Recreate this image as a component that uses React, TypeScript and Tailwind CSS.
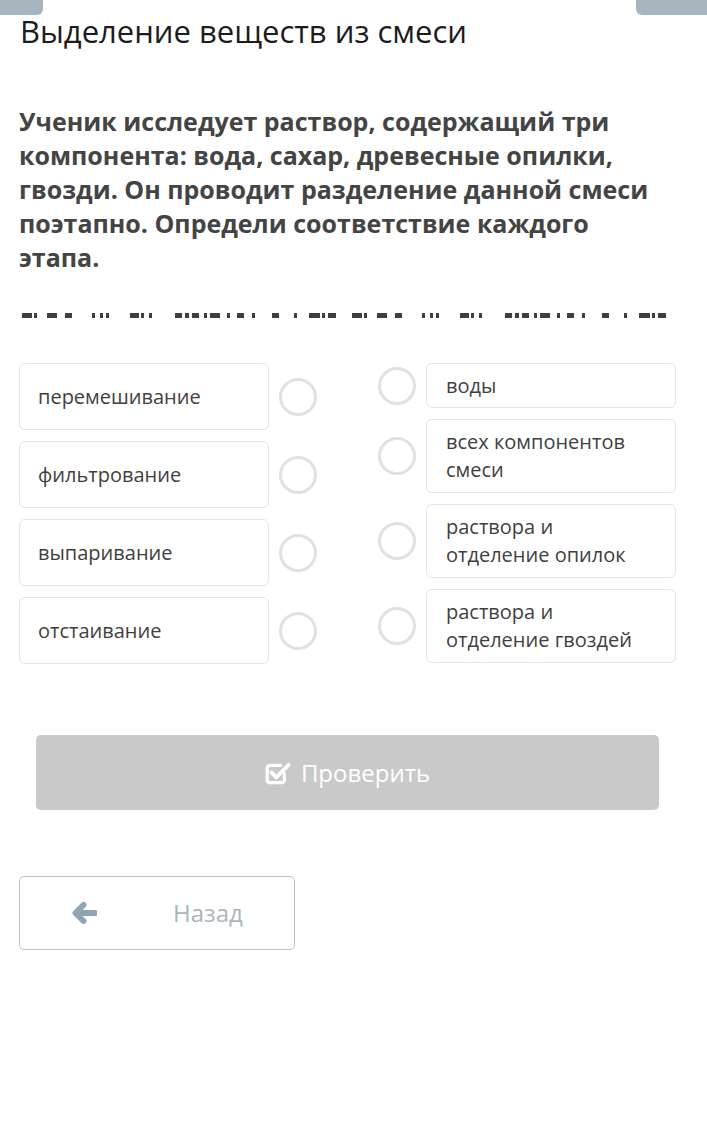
import React from 'react';

// left column: stages, right column: what gets separated
const stages = ['перемешивание', 'фильтрование', 'выпаривание', 'отстаивание'];

const results = [
  { text: 'воды', h: 'h-[45px]' },
  { text: 'всех компонентов смеси', h: 'h-[74px]' },
  { text: 'раствора и отделение опилок', h: 'h-[74px]' },
  { text: 'раствора и отделение гвоздей', h: 'h-[74px]' },
];

// dashes of the hidden hint line: [x, width]
const dashGroup: [number, number][] = [
  [0, 10], [12, 3], [25, 10], [43, 7],
  [70, 3], [78, 3], [84, 3],
  [108, 9], [119, 3], [127, 3],
  [153, 7], [163, 4], [170, 7], [182, 3], [188, 10], [205, 3], [215, 7], [230, 3],
  [250, 7], [272, 3], [287, 11], [300, 3], [306, 8],
];

const Circle = () => (
  <div className="w-[38px] h-[38px] rounded-full border-[3px] border-[#dde3e4] bg-white shrink-0" />
);

const CheckIcon = () => (
  <svg width="28" height="26" viewBox="0 0 26 24" fill="none">
    <path
      d="M18 12.5V18.5a2.5 2.5 0 0 1-2.5 2.5H4.5A2.5 2.5 0 0 1 2 18.5V7.5A2.5 2.5 0 0 1 4.5 5h10"
      stroke="white"
      strokeWidth="3"
      strokeLinecap="round"
    />
    <path d="M6 11.5l4.5 4.5L22 4.5" stroke="white" strokeWidth="3.6" strokeLinecap="round" strokeLinejoin="round" />
  </svg>
);

const ArrowLeft = () => (
  <svg width="25" height="22" viewBox="0 0 25 22" fill="none">
    <path d="M23 11H5" stroke="#8ea6b4" strokeWidth="6" strokeLinecap="round" />
    <path d="M11.5 3L3.5 11l8 8" stroke="#8ea6b4" strokeWidth="6" strokeLinecap="round" strokeLinejoin="round" />
  </svg>
);

const App = () => {
  return (
    <div className="w-[707px] min-h-[1134px] bg-white font-['Open_Sans',_'Liberation_Sans',_sans-serif]">
      <div className="flex justify-between h-[15px]">
        <div className="w-[43px] h-[15px] bg-[#a6b5bf] rounded-br-[6px]" />
        <div className="w-[71px] h-[15px] bg-[#a6b5bf] rounded-bl-[6px]" />
      </div>

      <div className="pl-[19px] w-[676px]">
        <h1 className="text-[31px] leading-[32px] text-[#1c1c1c] font-normal pl-[1px]">
          Выделение веществ из смеси
        </h1>

        <p className="mt-[57px] text-[25px] leading-[34px] font-bold text-[#444444] pr-[20px]">
          Ученик исследует раствор, содержащий три компонента: вода, сахар, древесные опилки, гвозди. Он проводит
          разделение данной смеси поэтапно. Определи соответствие каждого этапа.
        </p>

        <svg className="mt-[39px] block" width="657" height="5" viewBox="0 0 657 5">
          {[3, 333].map((off) =>
            dashGroup.map(([x, w], i) => (
              <rect key={`${off}-${i}`} x={off + x} y="0" width={w} height="5" fill="#3b4045" />
            ))
          )}
        </svg>

        <div className="mt-[45px] flex">
          <div className="flex flex-col gap-[11px]">
            {stages.map((s) => (
              <div key={s} className="flex items-center gap-[10px]">
                <div className="w-[250px] h-[67px] border border-[#e0e7e7] rounded-[6px] flex items-center px-[18px] text-[20px] text-[#3f3f3f]">
                  {s}
                </div>
                <Circle />
              </div>
            ))}
          </div>

          <div className="ml-[61px] flex flex-col gap-[11px]">
            {results.map((r) => (
              <div key={r.text} className="flex items-center gap-[10px]">
                <Circle />
                <div
                  className={`w-[250px] ${r.h} border border-[#e0e7e7] rounded-[6px] flex items-center px-[19px] text-[20px] leading-[28px] text-[#3f3f3f]`}
                >
                  <span className="w-[200px]">{r.text}</span>
                </div>
              </div>
            ))}
          </div>
        </div>

        <div className="mt-[71px] px-[17px]">
          <button className="w-full h-[75px] bg-[#c9c9c9] rounded-[5px] flex items-center justify-center gap-[8px] text-white text-[24px]">
            <CheckIcon />
            <span>Проверить</span>
          </button>
        </div>

        <div className="mt-[66px]">
          <button className="w-[276px] h-[74px] border border-[#b8c4ca] rounded-[5px] flex items-center bg-white">
            <span className="ml-[52px]">
              <ArrowLeft />
            </span>
            <span className="ml-[76px] text-[24px] text-[#a9b6be]">Назад</span>
          </button>
        </div>
      </div>
    </div>
  );
};

export default App;
